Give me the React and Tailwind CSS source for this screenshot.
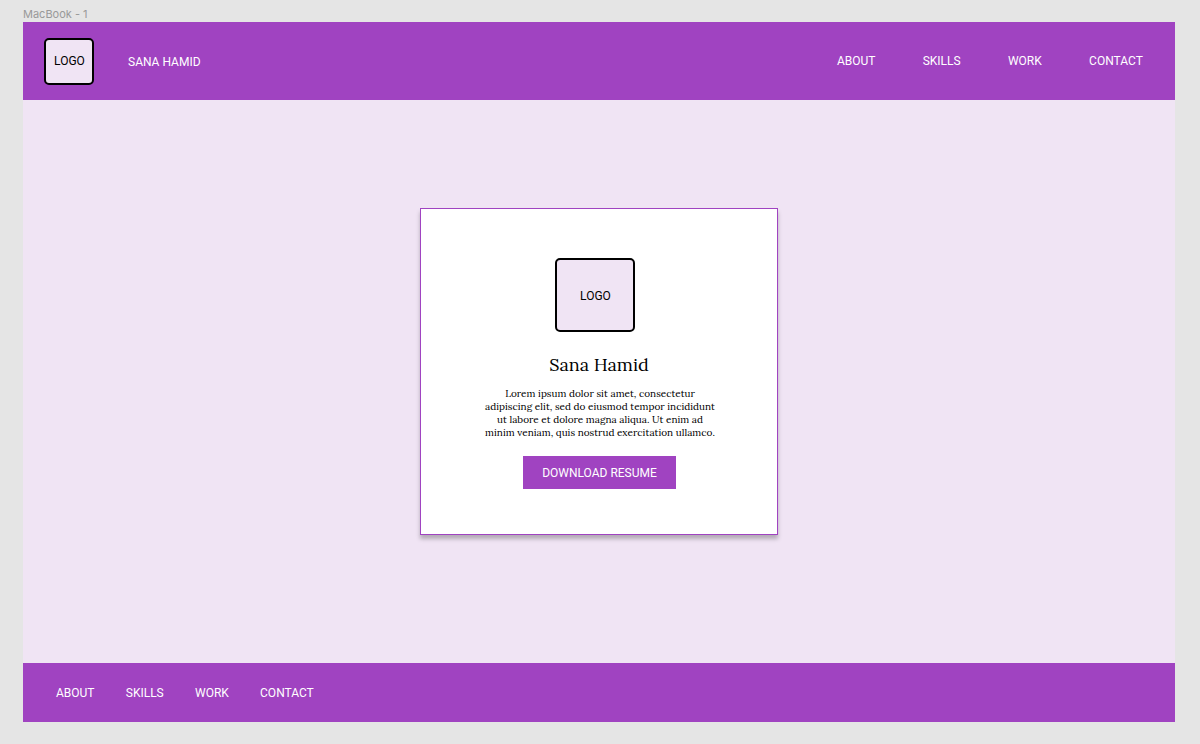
const LINKS = ["ABOUT", "SKILLS", "WORK", "CONTACT"];

const BIO = [
  "Lorem ipsum dolor sit amet, consectetur",
  "adipiscing elit, sed do eiusmod tempor incididunt",
  "ut labore et dolore magna aliqua. Ut enim ad",
  "minim veniam, quis nostrud exercitation ullamco.",
];

function Logo({ className }) {
  return (
    <div className={`flex shrink-0 items-center justify-center rounded-[5px] border-2 border-black bg-[#f0e4f4] pl-px text-black ${className}`}>
      LOGO
    </div>
  );
}

function Links({ className }) {
  return (
    <nav className={`flex ${className}`}>
      {LINKS.map((label) => (
        <a key={label} href="#">{label}</a>
      ))}
    </nav>
  );
}

export default function App() {
  return (
    <div className="flex h-[744px] w-[1200px] flex-col overflow-hidden bg-[#e5e5e5] pr-[25px] pl-[23px] font-['Roboto',sans-serif] text-[12px] leading-[14px] text-white">
      <div className="h-[22px] shrink-0 pt-[7px] font-['Inter',sans-serif] text-[11px] text-[#999999]">MacBook - 1</div>

      <header className="flex h-[78px] shrink-0 items-start bg-[#a043c1] pt-4 pr-[32.2px] pl-[21px]">
        <Logo className="h-[47px] w-[50px] pb-px" />
        <span className="mt-[17px] ml-[34px]">SANA HAMID</span>
        <Links className="mt-4 ml-auto gap-[47.3px]" />
      </header>

      <main className="flex h-[563px] shrink-0 flex-col items-center bg-[#f0e4f4] pt-[108px]">
        <section className="flex h-[327px] w-[358px] flex-col items-center border border-[#a043c1] bg-white pt-[49px] text-black shadow-[0_4px_4px_rgba(0,0,0,0.25)]">
          <Logo className="mr-2 h-[74px] w-20 pt-[2px]" />
          <h1 className="mt-[21px] font-['Lora','Liberation_Serif',serif] text-[18px] leading-6 whitespace-nowrap">Sana Hamid</h1>
          <p className="mt-[10px] flex flex-col items-center pl-[2px] font-['Lora','Liberation_Serif',serif] text-[10px] leading-[13px]">
            {BIO.map((line) => (
              <span key={line} className="whitespace-nowrap">{line}</span>
            ))}
          </p>
          <button className="mt-[17px] ml-px flex h-[33px] w-[153px] shrink-0 items-center justify-center bg-[#a043c1] text-white">
            DOWNLOAD RESUME
          </button>
        </section>
      </main>

      <footer className="flex h-[59px] shrink-0 items-center bg-[#a043c1] pl-[33px]">
        <Links className="gap-[31.25px]" />
      </footer>
    </div>
  );
}
